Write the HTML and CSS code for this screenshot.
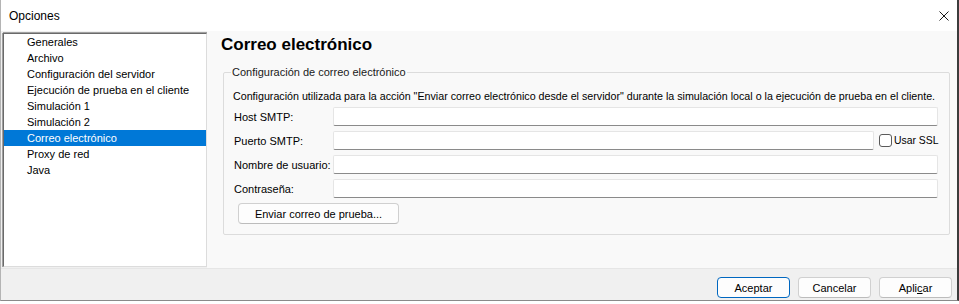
FILE: index.html
```html
<!DOCTYPE html>
<html lang="es">
<head>
<meta charset="utf-8">
<title>Opciones</title>
<link rel="stylesheet" href="styles.css">
</head>
<body>
<div class="window">
  <div class="titlebar">
    <span class="title">Opciones</span>
    <span class="close">
      <svg width="10" height="10" viewBox="0 0 10 10"><path d="M0.5 0.5 L9.5 9.5 M9.5 0.5 L0.5 9.5" stroke="#1a1a1a" stroke-width="1" fill="none"/></svg>
    </span>
  </div>
  <div class="client">
    <div class="main">
      <ul class="tree">
        <li>Generales</li>
        <li>Archivo</li>
        <li>Configuración del servidor</li>
        <li>Ejecución de prueba en el cliente</li>
        <li>Simulación 1</li>
        <li>Simulación 2</li>
        <li class="selected">Correo electrónico</li>
        <li>Proxy de red</li>
        <li>Java</li>
      </ul>
      <div class="pane">
        <h1 class="pane-title">Correo electrónico</h1>
        <fieldset class="group">
          <legend>Configuración de correo electrónico</legend>
          <p class="desc">Configuración utilizada para la acción "Enviar correo electrónico desde el servidor" durante la simulación local o la ejecución de prueba en el cliente.</p>
          <div class="row">
            <label class="lbl">Host SMTP:</label>
            <span class="input"></span>
          </div>
          <div class="row">
            <label class="lbl">Puerto SMTP:</label>
            <span class="input"></span>
            <span class="ssl"><span class="check"></span><span class="ssl-text">Usar SSL</span></span>
          </div>
          <div class="row">
            <label class="lbl">Nombre de usuario:</label>
            <span class="input"></span>
          </div>
          <div class="row">
            <label class="lbl">Contraseña:</label>
            <span class="input"></span>
          </div>
          <div class="btn-row">
            <button class="btn test">Enviar correo de prueba...</button>
          </div>
        </fieldset>
      </div>
    </div>
    <div class="footer">
      <button class="btn default">Aceptar</button>
      <button class="btn">Cancelar</button>
      <button class="btn">Apli<u>c</u>ar</button>
    </div>
  </div>
</div>
</body>
</html>
```

FILE: styles.css
```css
html, body {
  margin: 0;
  padding: 0;
  background: #ffffff;
}
body {
  width: 959px;
  height: 304px;
  overflow: hidden;
  font-family: "Liberation Sans", Arial, sans-serif;
  font-size: 11px;
  color: #000;
}
.window {
  width: 959px;
  height: 301px;
  box-sizing: border-box;
  border-left: 1px solid #b4b4b4;
  border-right: 2px solid #3c3c3c;
  border-bottom: 1px solid #8a8a8a;
  display: flex;
  flex-direction: column;
}
.titlebar {
  height: 31px;
  flex: none;
  display: flex;
  align-items: center;
  justify-content: space-between;
  background: #ffffff;
  padding: 0 8px 0 8px;
}
.title {
  font-size: 12px;
  line-height: 16px;
}
.close {
  display: flex;
  width: 10px;
  height: 10px;
}
.client {
  flex: 1;
  display: flex;
  flex-direction: column;
  background: #f0f0f0;
}
.main {
  height: 237px;
  flex: none;
  display: flex;
  padding-left: 2px;
}
.tree {
  list-style: none;
  margin: 2px 0 1px 0;
  padding: 0;
  width: 204px;
  flex: none;
  box-sizing: border-box;
  background: #ffffff;
  border-top: 1px solid #6a6a6a;
  border-left: 1px solid #6a6a6a;
  border-right: 1px solid #dcdcdc;
  border-bottom: 1px solid #dcdcdc;
  box-shadow: 0 -1px 0 #a0a0a0, -1px 0 0 #a0a0a0;
}
.tree li {
  height: 16px;
  line-height: 16px;
  padding-left: 23px;
  white-space: nowrap;
}
.tree li.selected {
  background: #0078d7;
  color: #ffffff;
}
.pane {
  flex: 1;
  background: #f9f9f9;
  padding: 4px 7px 0 16px;
  min-width: 0;
}
.pane-title {
  margin: 0 0 0 -2px;
  font-size: 17px;
  font-weight: bold;
  line-height: 20px;
}
.group {
  min-width: 0;
  margin: 11px 0 0 0;
  padding: 0 11px 10px 10px;
  border: 1px solid #dcdcdc;
  border-radius: 2px;
}
.group legend {
  padding: 0 1px;
  margin-left: -3px;
  line-height: 13px;
  color: #1a1a1a;
}
.desc {
  margin: 11px 0 4px -1px;
  line-height: 13px;
  white-space: nowrap;
  font-size: 10.7px;
}
.row {
  display: flex;
  align-items: center;
  height: 19px;
  margin-bottom: 5px;
}
.lbl {
  width: 99px;
  flex: none;
  white-space: nowrap;
}
.input {
  flex: 1;
  min-width: 0;
  height: 19px;
  box-sizing: border-box;
  background: #ffffff;
  border: 1px solid #e5e5e5;
  border-bottom-color: #8a8a8a;
  border-radius: 2px;
}
.ssl {
  flex: none;
  width: 59px;
  margin-left: 5px;
  display: flex;
  align-items: center;
  gap: 2px;
  white-space: nowrap;
}
.ssl-text {
  font-size: 10.4px;
}
.check {
  flex: none;
  width: 13px;
  height: 13px;
  box-sizing: border-box;
  border: 1px solid #5a5a5a;
  border-radius: 3px;
  background: #ffffff;
}
.btn-row {
  display: flex;
  padding-left: 4px;
}
.btn {
  font-family: "Liberation Sans", Arial, sans-serif;
  font-size: 11px;
  color: #000;
  height: 21px;
  box-sizing: border-box;
  background: #fdfdfd;
  border: 1px solid #d0d0d0;
  border-bottom-color: #bcbcbc;
  border-radius: 4px;
  padding: 0;
  margin: 0;
}
.btn.test {
  width: 161px;
}
.footer {
  flex: 1;
  display: flex;
  justify-content: flex-end;
  align-items: flex-start;
  gap: 8px;
  padding: 8px 5px 0 0;
  background: #f0f0f0;
  border-top: 1px solid #e6e6e6;
}
.footer .btn {
  width: 73px;
}
.btn.default {
  border: 1px solid #0067c0;
}
```
